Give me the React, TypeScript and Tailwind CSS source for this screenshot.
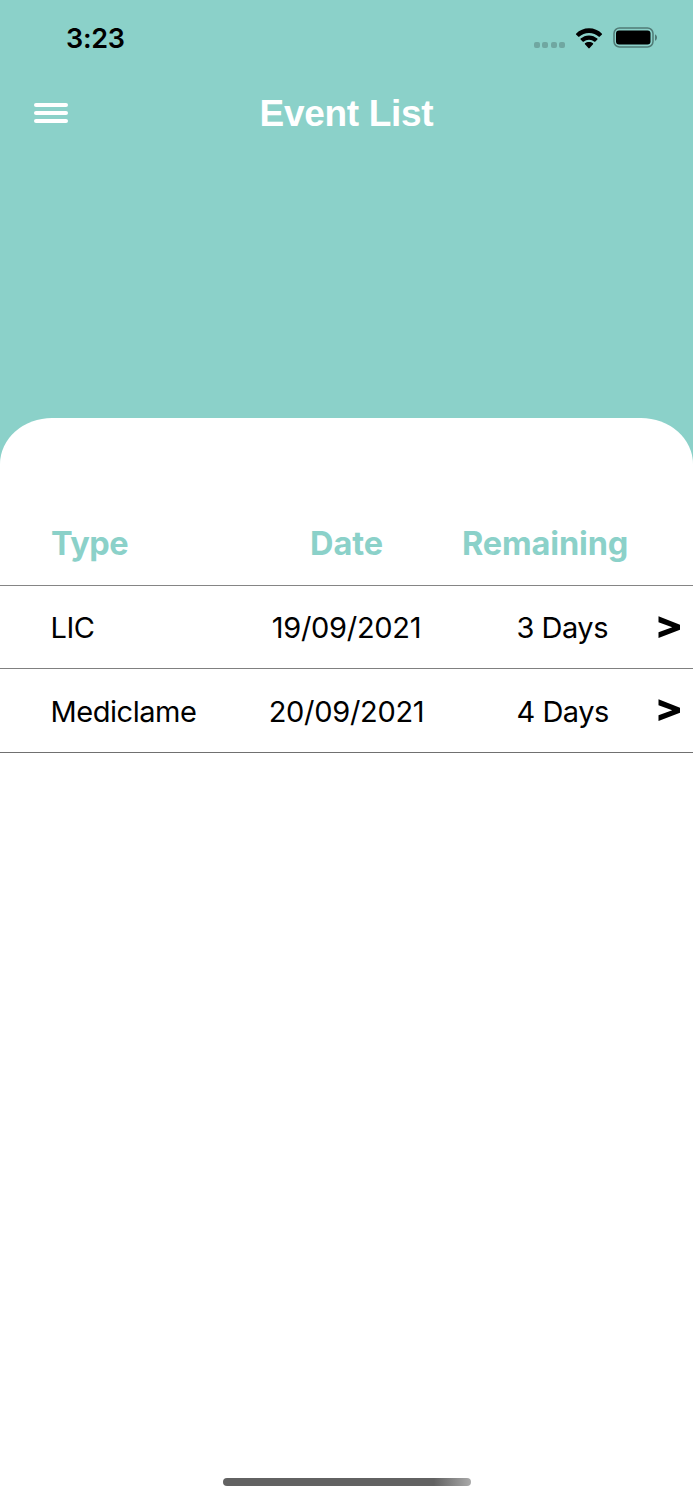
const events = [
    { type: "LIC", date: "19/09/2021", remaining: "3 Days" },
    { type: "Mediclame", date: "20/09/2021", remaining: "4 Days" },
];

function StatusBar() {
    return (
        <div className="flex h-[76px] items-center justify-between pl-[66px] pr-[35px] text-black">
            <span className="text-[27px] font-semibold leading-none tracking-[-0.3px]">3:23</span>
            <div className="flex items-center">
                <div className="mr-[10px] mt-[14px] flex gap-[2.4px]">
                    {[0, 1, 2, 3].map((dot) => (
                        <span key={dot} className="h-[6px] w-[6px] rounded-[2px] bg-[#70a7a1]" />
                    ))}
                </div>
                <svg width="28" height="21" viewBox="0 0 27 20" fill="currentColor" className="mr-[10px]">
                    <path d="M13.5 4.6c3.7 0 7 1.4 9.5 3.7.2.2.5.2.7 0l2.3-2.2c.2-.2.2-.6 0-.8C22.7 2.1 18.3.2 13.5.2S4.3 2.1 1 5.3c-.2.2-.2.6 0 .8l2.3 2.2c.2.2.5.2.7 0 2.5-2.3 5.8-3.7 9.5-3.7z" />
                    <path d="M13.5 11.2c2 0 3.8.7 5.2 1.9.2.2.5.2.7 0l2.2-2.2c.2-.2.2-.6 0-.8-2.2-1.9-5-3.1-8.1-3.1s-5.9 1.2-8.1 3.1c-.2.2-.2.6 0 .8l2.2 2.2c.2.2.5.2.7 0 1.4-1.2 3.2-1.9 5.2-1.9z" />
                    <path d="M17.4 15.5c.2-.2.2-.6 0-.8-1-.8-2.4-1.3-3.9-1.3s-2.9.5-3.9 1.3c-.2.2-.2.6 0 .8l3.5 3.9c.2.2.6.2.8 0z" />
                </svg>
                <svg width="45" height="21" viewBox="0 0 45 21" className="-mt-px">
                    <rect x="1" y="1" width="39" height="19" rx="5.5" fill="none" stroke="#507b76" strokeWidth="1.5" />
                    <rect x="3" y="3.5" width="34.5" height="14" rx="3" fill="#000" />
                    <path d="M42 7.2c1.5.7 2 2 2 3.3s-.5 2.6-2 3.3z" fill="#507b76" />
                </svg>
            </div>
        </div>
    );
}

export default function App() {
    return (
        <div className="flex h-[1500px] w-[693px] flex-col bg-[#8bd1c9] font-[Inter,sans-serif]">
            <StatusBar />

            {/* Header */}
            <header className="grid h-[74px] grid-cols-[1fr_auto_1fr] items-center text-white">
                <button aria-label="Menu" className="-mt-px ml-[33.5px] flex w-[34px] flex-col gap-1">
                    <span className="h-1 w-full rounded-full bg-white" />
                    <span className="h-1 w-full rounded-full bg-white" />
                    <span className="h-1 w-full rounded-full bg-white" />
                </button>
                <h1 className="font-['Liberation_Sans',sans-serif] text-[37px] font-bold leading-none tracking-[-0.3px]">Event List</h1>
            </header>

            {/* Event table */}
            <main className="mt-[268px] flex flex-1 flex-col rounded-t-[52px_46px] bg-white pt-[84px]">
                <div className="grid h-[84px] grid-cols-[231px_231px_231px] items-center border-b border-[#858585] pt-[2px] text-[32.5px] font-bold text-[#8bd1c9]">
                    <span className="pl-[51px] tracking-[-0.5px]">Type</span>
                    <span className="text-center tracking-[-0.1px]">Date</span>
                    <span className="pr-[67px] text-right tracking-[-0.15px]">Remaining</span>
                </div>
                {events.map((event) => (
                    <div
                        key={event.type}
                        className="grid h-[83px] grid-cols-[231px_231px_231px] items-center border-b border-[#808080] pt-[2px] text-[29px] text-black last:h-[84px] last:border-[#707070]"
                    >
                        <span className="pl-[50.5px] tracking-[-0.45px]">{event.type}</span>
                        <span className="text-center tracking-[-0.3px]">{event.date}</span>
                        <span className="flex items-center justify-between pl-[54.5px] pr-[12.5px] tracking-[-0.5px]">
                            {event.remaining}
                            <svg width="23" height="24" viewBox="0 0 23 24" className="-mt-[3px]">
                                <path d="M.5 1.3 22 9.8v5L.5 23.1v-5.8l13.7-5.1L.5 7.2z" fill="#000" />
                            </svg>
                        </span>
                    </div>
                ))}
            </main>

            {/* Home indicator */}
            <div className="flex h-[22px] justify-center bg-white">
                <div className="h-[8px] w-[248px] rounded-full bg-linear-to-r from-[#626262] from-85% to-[#aaaaaa]" />
            </div>
        </div>
    );
}
